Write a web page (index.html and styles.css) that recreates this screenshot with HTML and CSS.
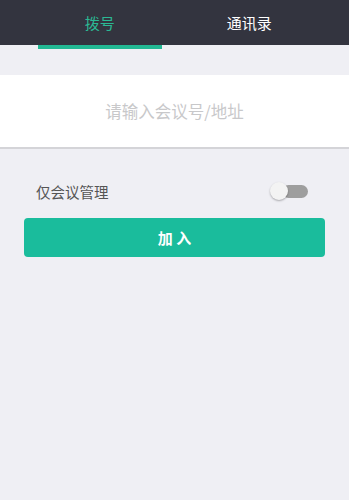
FILE: index.html
```html
<!DOCTYPE html>
<html lang="zh">
<head>
<meta charset="utf-8">
<link rel="stylesheet" href="styles.css">
</head>
<body>
<div class="app">
  <header class="header">
    <div class="tabs">
      <div class="tab active">拨号</div>
      <div class="tab">通讯录</div>
    </div>
  </header>
  <div class="indicator-row">
    <div class="indicator-cell"><div class="indicator"></div></div>
    <div class="indicator-cell"></div>
  </div>
  <div class="input-box">
    <span class="placeholder">请输入会议号/地址</span>
  </div>
  <div class="option-row">
    <span class="option-label">仅会议管理</span>
    <div class="switch"><div class="track"></div><div class="knob"></div></div>
  </div>
  <div class="btn-wrap">
    <button class="join-btn">加 入</button>
  </div>
</div>
</body>
</html>
```
FILE: styles.css
```css
html, body {
  margin: 0;
  padding: 0;
  background: #efeff4;
  font-family: "Noto Sans CJK SC", "Noto Sans", sans-serif;
}
.app {
  width: 349px;
  height: 500px;
  background: #efeff4;
}
.header {
  background: #33343f;
  height: 45px;
}
.tabs {
  display: flex;
  padding: 0 25px;
  height: 45px;
}
.tab {
  flex: 1;
  display: flex;
  align-items: center;
  justify-content: center;
  color: #ffffff;
  font-size: 15px;
}
.tab.active {
  color: #2bb894;
}
.indicator-row {
  display: flex;
  padding: 0 25px;
  height: 4px;
}
.indicator-cell {
  flex: 1;
  display: flex;
  justify-content: center;
}
.indicator {
  width: 124px;
  height: 4px;
  background: #22b893;
}
.input-box {
  margin-top: 26px;
  height: 72px;
  background: #ffffff;
  border-bottom: 2px solid #d4d4d8;
  display: flex;
  align-items: center;
  justify-content: center;
}
.placeholder {
  color: #c8c8ca;
  font-size: 16.5px;
}
.option-row {
  display: flex;
  align-items: center;
  justify-content: space-between;
  padding: 0 41px 0 36px;
  height: 40px;
  margin-top: 22px;
}
.option-label {
  color: #555555;
  font-size: 14.5px;
}
.switch {
  position: relative;
  width: 38px;
  height: 18px;
}
.track {
  position: absolute;
  left: 12px;
  top: 3px;
  width: 26px;
  height: 13px;
  border-radius: 7px;
  background: #9e9e9e;
}
.knob {
  position: absolute;
  left: 0;
  top: 0;
  width: 18px;
  height: 18px;
  border-radius: 50%;
  background: #f3f3f3;
  box-shadow: 0 1px 2px rgba(0,0,0,0.3);
}
.btn-wrap {
  padding: 0 24px;
  margin-top: 7px;
}
.join-btn {
  width: 100%;
  height: 39px;
  border: none;
  border-radius: 4px;
  background: #1abc9c;
  color: #ffffff;
  font-family: "Noto Sans CJK SC", "Noto Sans", sans-serif;
  font-size: 15px;
  font-weight: bold;
  padding: 0;
}
```
